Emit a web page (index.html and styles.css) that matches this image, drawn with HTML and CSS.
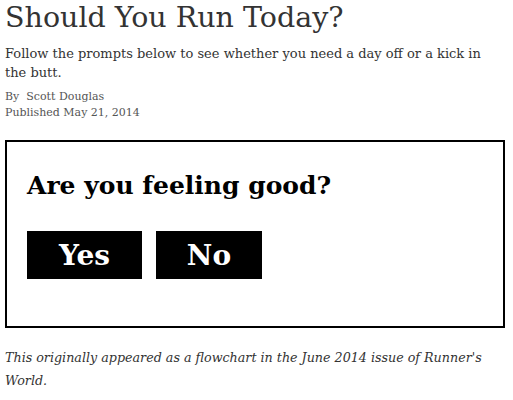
FILE: index.html
```html
<!DOCTYPE html>
<html lang="en">
<head>
    <meta charset="UTF-8">
    <meta name="viewport" content="width=device-width, initial-scale=1.0">
    <title>Should You Run Today?</title>
    <link rel="stylesheet" href="styles.css">
</head>
<body>
    <div class="article">
        <h1 class="title">Should You Run Today?</h1>
        <p class="dek">Follow the prompts below to see whether you need a day off or a kick in the butt.</p>
        <div class="byline">By&nbsp; Scott Douglas</div>
        <div class="dateline">Published May 21, 2014</div>

        <div class="flowchart">
            <h2 class="question">Are you feeling good?</h2>
            <div class="answers">
                <button class="answer answer-yes">Yes</button>
                <button class="answer answer-no">No</button>
            </div>
        </div>

        <p class="note">This originally appeared as a flowchart in the June 2014 issue of Runner's World.</p>
    </div>
</body>
</html>
```
FILE: styles.css
```css
body, html {
    margin: 0;
    background-color: #fff;
    font-family: "DejaVu Serif", Georgia, serif;
    color: #333;
}
.article {
    padding: 0 8px 0 5px;
}
.title {
    margin: 0;
    font-size: 28.5px;
    font-weight: normal;
    line-height: 36px;
    color: #333;
}
.dek {
    margin: 8px 0 0;
    font-size: 13px;
    line-height: 19px;
}
.byline, .dateline {
    font-size: 11px;
    line-height: 16px;
    color: #555;
}
.byline {
    margin-top: 7px;
}
.flowchart {
    margin-top: 19px;
    border: 2px solid #000;
    padding: 24px 20px 47px;
    color: #000;
}
.question {
    margin: 0 0 25px;
    font-size: 25px;
    line-height: 40px;
}
.answers {
    display: flex;
    gap: 14px;
}
.answer {
    height: 48px;
    padding: 0;
    border: none;
    border-radius: 0;
    background-color: #000;
    color: #fff;
    font-family: inherit;
    font-size: 28px;
    font-weight: bold;
    cursor: pointer;
}
.answer-yes {
    width: 115px;
}
.answer-no {
    width: 106px;
}
.note {
    margin: 18px 0 0;
    font-size: 12.7px;
    font-style: italic;
    line-height: 23px;
}
```
